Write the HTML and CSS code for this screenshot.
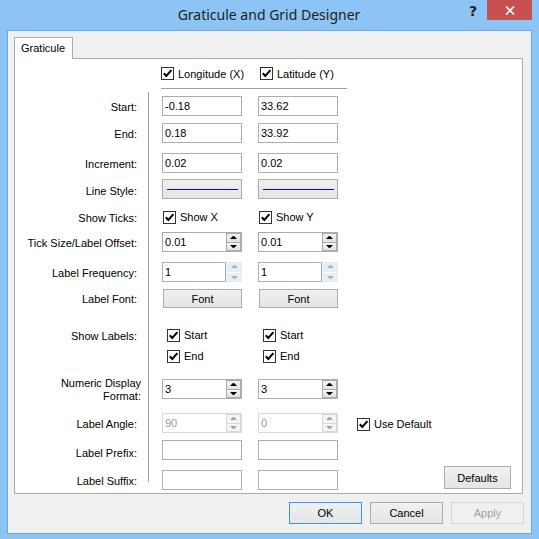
FILE: index.html
```html
<!DOCTYPE html>
<html>
<head>
<meta charset="utf-8">
<title>Graticule and Grid Designer</title>
<link rel="stylesheet" href="styles.css">
</head>
<body>
<div class="window">
  <div class="titlebar">
    <div class="tb-side"></div>
    <div class="title">Graticule and Grid Designer</div>
    <div class="tb-side tb-controls">
      <span class="help">?</span>
      <span class="close"><svg width="10" height="9" viewBox="0 0 10 9"><path d="M1 0.5 L9 8.5 M9 0.5 L1 8.5" stroke="#fff" stroke-width="1.7" fill="none"/></svg></span>
    </div>
  </div>
  <div class="client">
    <div class="tabs"><div class="tab">Graticule</div></div>
    <div class="panel">
      <div class="head">
        <div class="cb head-first"><span class="box"><svg width="11" height="11" viewBox="0 0 11 11"><path d="M1.8 5.3 L4.3 8 L9.4 2.2" stroke="#000" stroke-width="2" fill="none"/></svg></span>Longitude (X)</div>
        <div class="cb"><span class="box"><svg width="11" height="11" viewBox="0 0 11 11"><path d="M1.8 5.3 L4.3 8 L9.4 2.2" stroke="#000" stroke-width="2" fill="none"/></svg></span>Latitude (Y)</div>
      </div>
      <div class="form">
        <div class="sep"></div>

        <div class="lbl">Start:</div>
        <div class="txt c1">-0.18</div>
        <div class="txt c2">33.62</div>

        <div class="lbl">End:</div>
        <div class="txt c1">0.18</div>
        <div class="txt c2">33.92</div>

        <div class="lbl">Increment:</div>
        <div class="txt c1">0.02</div>
        <div class="txt c2">0.02</div>

        <div class="lbl lbl-low">Line Style:</div>
        <div class="linebtn c1"><span class="stroke"></span></div>
        <div class="linebtn c2"><span class="stroke"></span></div>

        <div class="lbl">Show Ticks:</div>
        <div class="cb c1 cb-tick"><span class="box"><svg width="11" height="11" viewBox="0 0 11 11"><path d="M1.8 5.3 L4.3 8 L9.4 2.2" stroke="#000" stroke-width="2" fill="none"/></svg></span>Show X</div>
        <div class="cb c2 cb-tick"><span class="box"><svg width="11" height="11" viewBox="0 0 11 11"><path d="M1.8 5.3 L4.3 8 L9.4 2.2" stroke="#000" stroke-width="2" fill="none"/></svg></span>Show Y</div>

        <div class="lbl">Tick Size/Label Offset:</div>
        <div class="spin c1"><span class="val">0.01</span><span class="ud"><span class="b"><i class="up"></i></span><span class="b"><i class="down"></i></span></span></div>
        <div class="spin c2"><span class="val">0.01</span><span class="ud"><span class="b"><i class="up"></i></span><span class="b"><i class="down"></i></span></span></div>

        <div class="lbl">Label Frequency:</div>
        <div class="spin split c1"><span class="val">1</span><span class="ud"><span class="b"><i class="up"></i></span><span class="b"><i class="down"></i></span></span></div>
        <div class="spin split c2"><span class="val">1</span><span class="ud"><span class="b"><i class="up"></i></span><span class="b"><i class="down"></i></span></span></div>

        <div class="lbl">Label Font:</div>
        <div class="btn fontbtn c1">Font</div>
        <div class="btn fontbtn c2">Font</div>

        <div class="lbl">Show Labels:</div>
        <div class="cb c1 cb-lab"><span class="box"><svg width="11" height="11" viewBox="0 0 11 11"><path d="M1.8 5.3 L4.3 8 L9.4 2.2" stroke="#000" stroke-width="2" fill="none"/></svg></span>Start</div>
        <div class="cb c2 cb-lab"><span class="box"><svg width="11" height="11" viewBox="0 0 11 11"><path d="M1.8 5.3 L4.3 8 L9.4 2.2" stroke="#000" stroke-width="2" fill="none"/></svg></span>Start</div>

        <div class="cb c1 cb-lab"><span class="box"><svg width="11" height="11" viewBox="0 0 11 11"><path d="M1.8 5.3 L4.3 8 L9.4 2.2" stroke="#000" stroke-width="2" fill="none"/></svg></span>End</div>
        <div class="cb c2 cb-lab"><span class="box"><svg width="11" height="11" viewBox="0 0 11 11"><path d="M1.8 5.3 L4.3 8 L9.4 2.2" stroke="#000" stroke-width="2" fill="none"/></svg></span>End</div>

        <div class="lbl lbl-two">Numeric Display<br>Format:</div>
        <div class="spin c1"><span class="val">3</span><span class="ud"><span class="b"><i class="up"></i></span><span class="b"><i class="down"></i></span></span></div>
        <div class="spin c2"><span class="val">3</span><span class="ud"><span class="b"><i class="up"></i></span><span class="b"><i class="down"></i></span></span></div>

        <div class="lbl">Label Angle:</div>
        <div class="spin dis c1"><span class="val">90</span><span class="ud"><span class="b"><i class="up"></i></span><span class="b"><i class="down"></i></span></span></div>
        <div class="spin dis c2"><span class="val">0</span><span class="ud"><span class="b"><i class="up"></i></span><span class="b"><i class="down"></i></span></span></div>
        <div class="cb c3 cb-def"><span class="box"><svg width="11" height="11" viewBox="0 0 11 11"><path d="M1.8 5.3 L4.3 8 L9.4 2.2" stroke="#000" stroke-width="2" fill="none"/></svg></span>Use Default</div>

        <div class="lbl lbl-prefix">Label Prefix:</div>
        <div class="txt c1"></div>
        <div class="txt c2"></div>

        <div class="lbl">Label Suffix:</div>
        <div class="txt c1"></div>
        <div class="txt c2"></div>
        <div class="btn defaults c3">Defaults</div>
      </div>
    </div>
    <div class="buttons">
      <div class="btn dlg default">OK</div>
      <div class="btn dlg">Cancel</div>
      <div class="btn dlg disabled">Apply</div>
    </div>
  </div>
</div>
</body>
</html>
```

FILE: styles.css
```css
html, body {
  margin: 0;
  padding: 0;
}
body {
  width: 539px;
  height: 539px;
  overflow: hidden;
  background: #8cc4f5;
  font-family: "Liberation Sans", Arial, sans-serif;
  font-size: 11px;
  color: #000;
}
.window {
  height: 539px;
  display: flex;
  flex-direction: column;
}
.titlebar {
  height: 30px;
  display: grid;
  grid-template-columns: 1fr auto 1fr;
  align-items: start;
}
.title {
  font-family: "Noto Sans", "Open Sans", sans-serif;
  font-size: 14px;
  color: #1e1e1e;
  line-height: 30px;
  padding-right: 1px;
}
.tb-controls {
  display: flex;
  justify-content: flex-end;
  align-items: flex-start;
  padding-right: 7px;
}
.help {
  font-family: "DejaVu Sans", sans-serif;
  font-weight: bold;
  font-size: 14px;
  line-height: 14px;
  color: #222;
  margin-top: 4px;
  margin-right: 10px;
}
.close {
  width: 45px;
  height: 20px;
  background: #c75050;
  display: flex;
  align-items: center;
  justify-content: center;
}
.client {
  flex: 1;
  margin: 0 7px 5px 7px;
  border: 1px solid #6fa7dd;
  background: #f0f0f0;
  display: flex;
  flex-direction: column;
  padding: 6px 8px 0 6px;
}
.tabs {
  display: flex;
  height: 21px;
  position: relative;
  z-index: 1;
}
.tab {
  width: 59px;
  box-sizing: border-box;
  height: 22px;
  border: 1px solid #adadad;
  border-bottom: none;
  background: #fff;
  padding-left: 6px;
  padding-top: 1px;
  line-height: 19px;
}
.panel {
  height: 436px;
  box-sizing: border-box;
  border: 1px solid #adadad;
  background: #fff;
}
.head {
  margin-left: 146px;
  width: 186px;
  height: 29px;
  border-bottom: 1px solid #a0a0a0;
  display: flex;
  align-items: center;
}
.head-first {
  width: 99px;
}
.cb {
  display: flex;
  align-items: center;
  height: 20px;
  white-space: nowrap;
}
.box {
  width: 13px;
  height: 13px;
  box-sizing: border-box;
  border: 1px solid #333;
  background: #fff;
  display: inline-flex;
  margin-right: 4px;
  flex: none;
}
.form {
  margin-top: 7px;
  display: grid;
  grid-template-columns: 126px 21px 80px 16px 80px 19px 1fr;
  grid-template-rows: 27px 30px 26px 28px 25px 30px 26px 37px 21px 33px 34px 27px 30px 20px;
  align-items: start;
}
.sep {
  grid-column: 2;
  grid-row: 1 / -1;
  margin-left: 7px;
  width: 1px;
  background: #a0a0a0;
  margin-top: -4px;
  align-self: stretch;
  margin-bottom: 8px;
}
.lbl {
  grid-column: 1;
  text-align: right;
  padding-right: 4px;
  padding-top: 1px;
  line-height: 20px;
  height: 20px;
  white-space: nowrap;
}
.lbl-low {
  padding-top: 2px;
}
.lbl-prefix {
  padding-top: 3px;
}
.lbl-two {
  line-height: 13px;
  height: auto;
  padding-right: 0;
  margin-top: -3px;
}
.c1 { grid-column: 3; }
.c2 { grid-column: 5; }
.c3 { grid-column: 7; }
.txt {
  height: 20px;
  box-sizing: border-box;
  border: 1px solid #abadb3;
  background: #fff;
  padding-left: 2px;
  display: flex;
  align-items: center;
}
.cb-tick {
  margin-left: 1px;
}
.cb-lab {
  margin-left: 5px;
}
.cb-def {
  margin-top: 1px;
}
.linebtn {
  height: 20px;
  box-sizing: border-box;
  border: 1px solid #acacac;
  background: linear-gradient(#f0f0f0, #e5e5e5);
  display: flex;
  align-items: center;
  justify-content: center;
}
.stroke {
  width: 71px;
  height: 1px;
  background: #0000ff;
}
.btn {
  box-sizing: border-box;
  border: 1px solid #acacac;
  background: linear-gradient(#f0f0f0, #e5e5e5);
  display: flex;
  align-items: center;
  justify-content: center;
}
.fontbtn {
  height: 19px;
  margin-top: 1px;
  margin-left: 1px;
}
.defaults {
  width: 67px;
  height: 23px;
  justify-self: end;
  margin-right: 11px;
  margin-top: -4px;
}
.spin {
  height: 20px;
  box-sizing: border-box;
  border: 1px solid #abadb3;
  background: #fff;
  display: flex;
}
.spin .val {
  flex: 1;
  padding-left: 2px;
  display: flex;
  align-items: center;
}
.ud {
  width: 15px;
  display: flex;
  flex-direction: column;
}
.ud .b {
  flex: 1;
  box-sizing: border-box;
  border: 1px solid #acacac;
  background: linear-gradient(#f3f3f3, #e3e3e3);
  display: flex;
  align-items: center;
  justify-content: center;
}
.ud .b + .b {
  border-top: none;
}
.up, .down {
  width: 1px;
  height: 0;
  border-left: 3px solid transparent;
  border-right: 3px solid transparent;
}
.up {
  border-bottom: 3px solid #000;
}
.down {
  border-top: 3px solid #000;
}
.spin.split {
  border: none;
  background: transparent;
}
.spin.split .val {
  border: 1px solid #abadb3;
  background: #fff;
}
.spin.split .ud {
  width: 16px;
  gap: 1px;
}
.spin.split .b {
  border: none;
  background: #e6eef8;
}
.spin.split .up { border-bottom-color: #a4b4c6; }
.spin.split .down { border-top-color: #a4b4c6; }
.spin.dis {
  border-color: #d9d9d9;
}
.spin.dis .val {
  color: #8f9aac;
}
.spin.dis .b {
  border-color: #d9d9d9;
  background: #f4f4f4;
}
.spin.dis .up { border-bottom-color: #a0a0a0; }
.spin.dis .down { border-top-color: #a0a0a0; }
.buttons {
  display: flex;
  justify-content: flex-end;
  gap: 8px;
  margin-top: 8px;
  margin-right: -1px;
}
.dlg {
  width: 73px;
  height: 22px;
}
.default {
  border-color: #3399ff;
}
.disabled {
  border-color: #d5d5d5;
  background: #f0f0f0;
  color: #a0a0a0;
}
```
